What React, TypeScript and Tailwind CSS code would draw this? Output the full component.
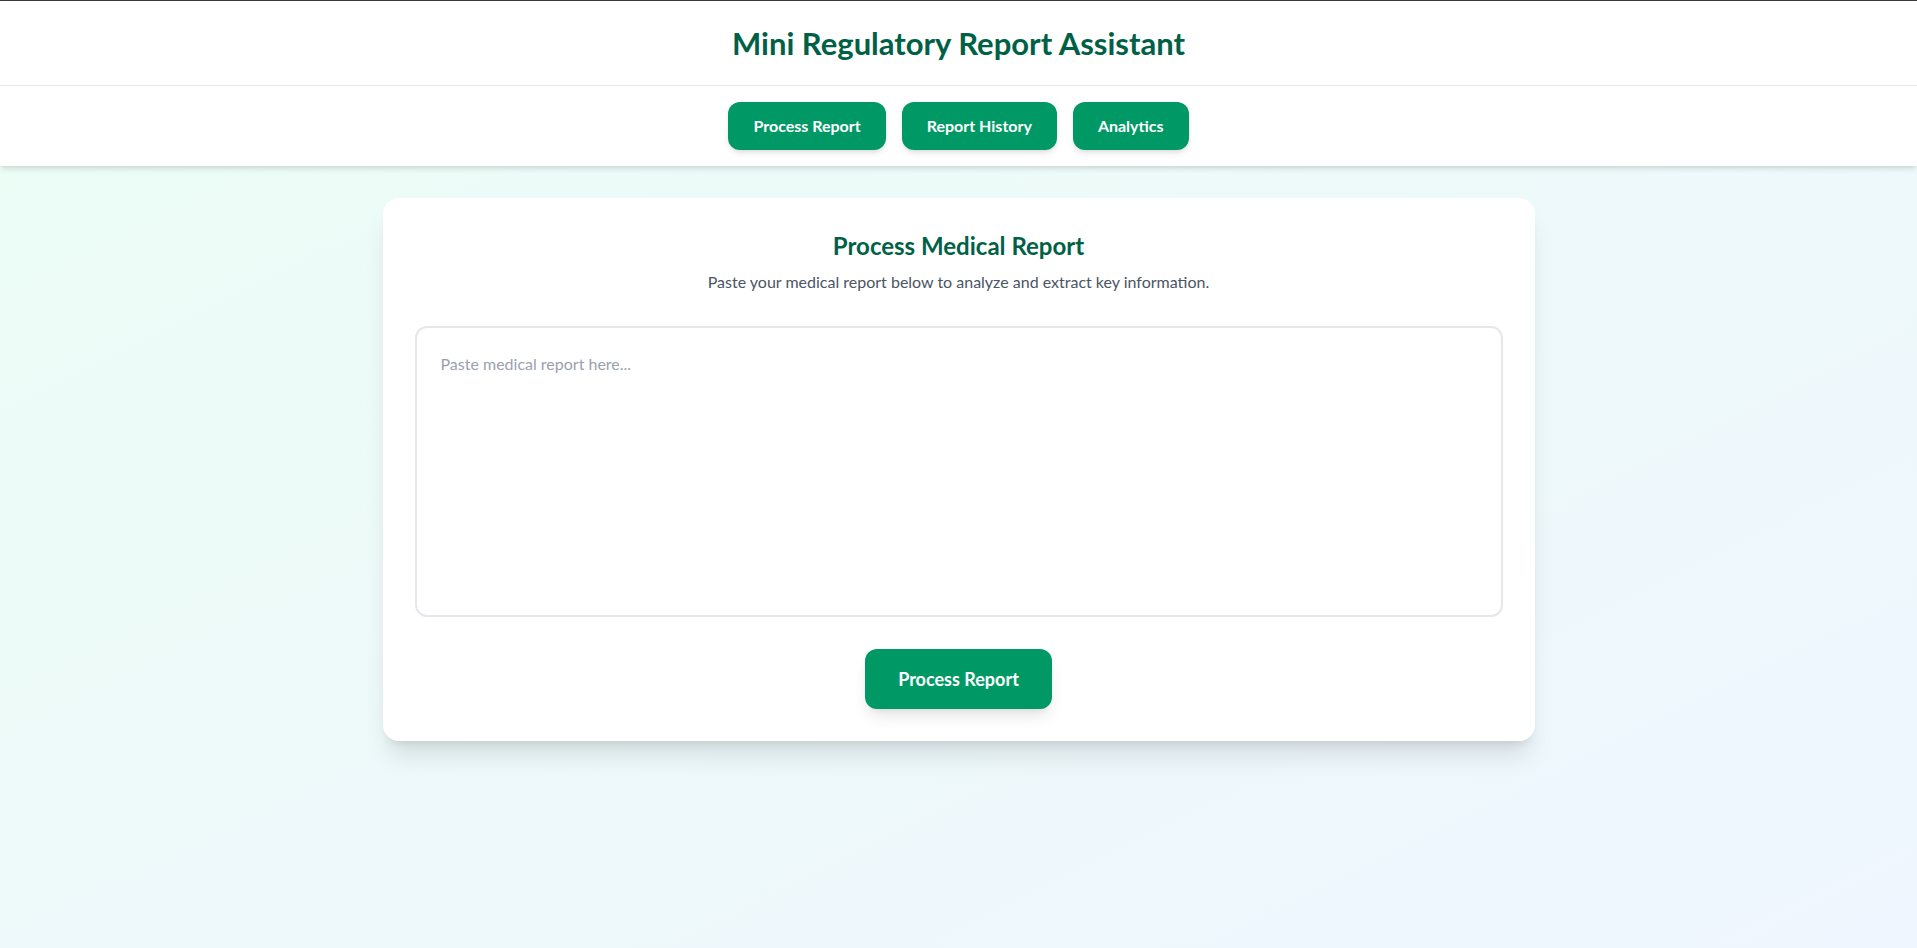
import { useState } from "react";

const navItems = ["Process Report", "Report History", "Analytics"];

export default function App() {
  const [active, setActive] = useState("Process Report");
  const [report, setReport] = useState("");

  return (
    <div
      className="min-h-screen border-t border-[#3a3a3a] bg-gradient-to-br from-emerald-50 to-blue-50"
      style={{ fontFamily: "Lato, 'Noto Sans', sans-serif" }}
    >
      {/* Header */}
      <header className="bg-white shadow-md">
        <div className="border-b border-gray-200 py-6 text-center">
          <h1 className="text-[31px] leading-9 font-bold text-emerald-800">Mini Regulatory Report Assistant</h1>
        </div>
        <nav className="flex justify-center gap-4 py-4">
          {navItems.map((item) => (
            <button
              key={item}
              onClick={() => setActive(item)}
              className="rounded-xl bg-emerald-600 px-[25px] py-3 text-base font-bold text-white shadow-md hover:bg-emerald-700"
            >
              {item}
            </button>
          ))}
        </nav>
      </header>

      {/* Main */}
      <main className="px-4 py-8">
        {active === "Process Report" && (
          <div className="mx-auto max-w-6xl rounded-2xl bg-white p-8 shadow-xl">
            <h2 className="text-center text-2xl font-bold text-emerald-800">Process Medical Report</h2>
            <p className="mt-2 text-center text-base text-gray-600">
              Paste your medical report below to analyze and extract key information.
            </p>
            <textarea
              value={report}
              onChange={(e) => setReport(e.target.value)}
              placeholder="Paste medical report here..."
              className="mt-8 block h-[291px] w-full resize-none rounded-xl border-2 border-gray-200 p-6 text-base text-gray-700 placeholder:text-gray-400 focus:outline-none"
            />
            <div className="mt-8 flex justify-center">
              <button className="rounded-xl bg-emerald-600 px-[33px] py-4 text-lg font-bold text-white shadow-lg hover:bg-emerald-700">
                Process Report
              </button>
            </div>
          </div>
        )}
      </main>
    </div>
  );
}
